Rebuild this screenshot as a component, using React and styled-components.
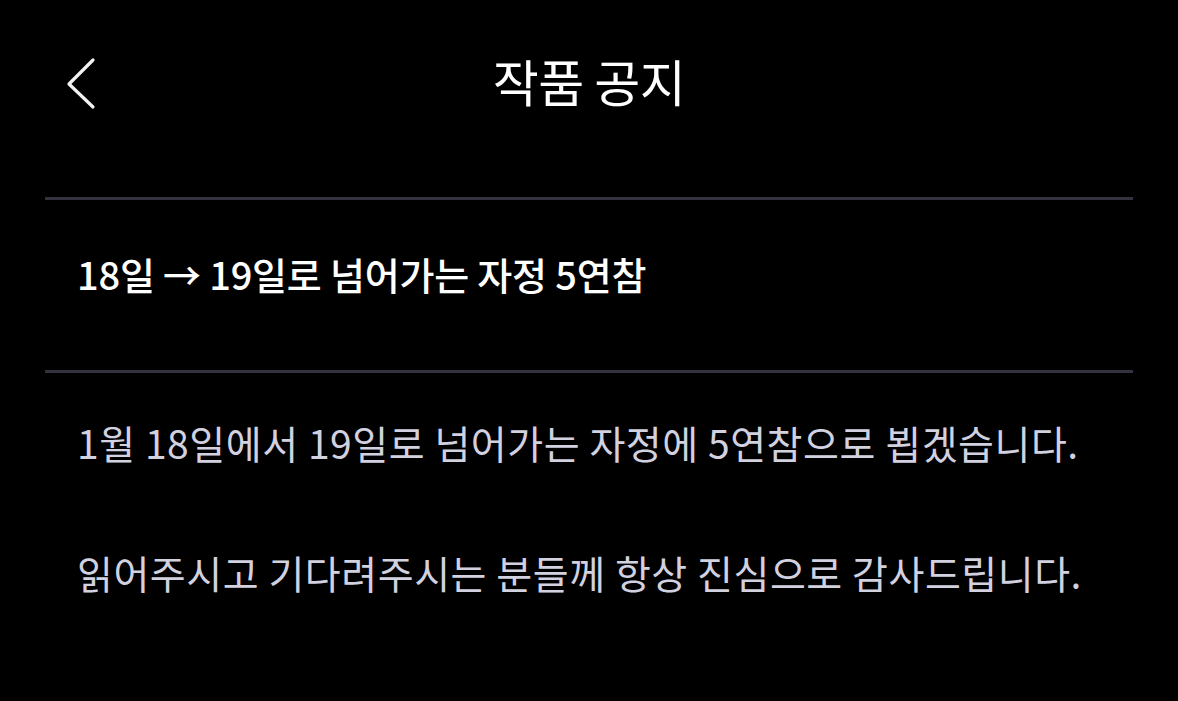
import React from 'react';
import styled, { createGlobalStyle } from 'styled-components';

const GlobalStyle = createGlobalStyle`
  html, body {
    margin: 0;
    padding: 0;
    background: #000;
  }
  body {
    font-family: "Noto Sans CJK KR", "Noto Sans", sans-serif;
  }
`;

const Page = styled.div`
  width: 1178px;
  height: 701px;
  background: #000;
  overflow: hidden;
`;

const Header = styled.header`
  position: relative;
  display: flex;
  align-items: center;
  justify-content: center;
  box-sizing: border-box;
  height: 168px;
  padding-bottom: 8px;
  margin-bottom: 29px;
`;

const BackButton = styled.button`
  position: absolute;
  left: 62px;
  top: 54px;
  width: 40px;
  height: 60px;
  padding: 0;
  border: none;
  background: none;
  cursor: pointer;
`;

const Title = styled.h1`
  margin: 0;
  color: #fff;
  font-size: 50px;
  font-weight: 400;
  letter-spacing: -0.5px;
`;

const Section = styled.section`
  margin: 0 45px;
  border-top: 3px solid #35323f;
  padding: ${(p) => p.$pad};
`;

const Subject = styled.h2`
  margin: 0;
  color: #fff;
  font-size: 38px;
  font-weight: 500;
  letter-spacing: -0.2px;
  line-height: 1;
`;

const Body = styled.p`
  margin: 0 0 ${(p) => p.$gap || 0}px;
  color: #d2d1e0;
  font-size: 39px;
  font-weight: 400;
  letter-spacing: 0.55px;
  line-height: 1;
`;

const Chevron = () => (
  <svg width="40" height="60" viewBox="0 0 40 60" fill="none">
    <path
      d="M31 6 L7 30 L31 53"
      stroke="#f2f2f2"
      strokeWidth="3.2"
      strokeLinecap="round"
      strokeLinejoin="round"
    />
  </svg>
);

const App = () => (
  <Page>
    <GlobalStyle />
    <Header>
      <BackButton aria-label="뒤로">
        <Chevron />
      </BackButton>
      <Title>작품 공지</Title>
    </Header>
    <Section $pad="55px 32px 77px">
      <Subject>18일 → 19일로 넘어가는 자정 5연참</Subject>
    </Section>
    <Section $pad="50px 32px 0">
      <Body $gap={91}>1월 18일에서 19일로 넘어가는 자정에 5연참으로 뵙겠습니다.</Body>
      <Body>읽어주시고 기다려주시는 분들께 항상 진심으로 감사드립니다.</Body>
    </Section>
  </Page>
);

export default App;
